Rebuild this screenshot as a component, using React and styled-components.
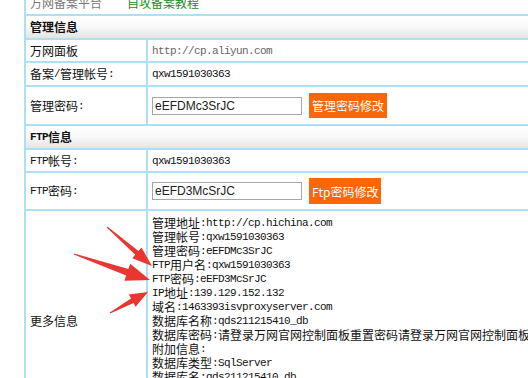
import React from 'react'
import styled, { createGlobalStyle } from 'styled-components'

const Global = createGlobalStyle`
  html, body {
    margin: 0;
    padding: 0;
    background: #fff;
    overflow: hidden;
  }
  body {
    width: 528px;
    height: 378px;
    position: relative;
    font-family: "Noto Sans CJK SC", "Liberation Sans", sans-serif;
    font-size: 12px;
    color: #111;
  }
`

const Page = styled.div`
  width: 528px;
  height: 378px;
  overflow: hidden;
  position: relative;
  padding-left: 24px;
  box-sizing: border-box;
`

const Grid = styled.div`
  margin-top: -8px;
  width: 640px;
  display: grid;
  grid-template-columns: 120px 1fr;
  gap: 2px;
  padding-left: 2px;
  background: #aee0f5;
`

const Cell = styled.div`
  background: #fff;
  min-height: ${p => p.h || 22}px;
  display: flex;
  align-items: center;
  padding: 0 4px;
  white-space: nowrap;
  line-height: 14px;
  color: ${p => p.muted ? '#666' : '#111'};
  grid-column: ${p => p.span ? '1 / -1' : 'auto'};
`

const TopCell = styled(Cell)`
  gap: 25px;
`

const TopLink = styled.span`
  color: ${p => p.green ? '#1f8a1f' : '#777'};
`

const Header = styled(Cell)`
  font-weight: bold;
  background: linear-gradient(#fff 0%, #fafafa 45%, #e4e4e4 100%);
`

const Mono = styled.span`
  font-family: "Liberation Mono", monospace;
  font-size: 11px;
  letter-spacing: -0.6px;
`

const Cjk = styled.span`
  font-family: "Noto Sans CJK SC", sans-serif;
`

const Input = styled.input`
  width: 150px;
  height: 18px;
  box-sizing: border-box;
  border: 1px solid #a7a7a7;
  padding: 0 2px;
  font-family: "Liberation Sans", Arial, sans-serif;
  font-size: 12px;
  color: #222;
  outline: none;
`

const Button = styled.button`
  margin-left: 7px;
  height: ${p => p.tall ? 26 : 25}px;
  padding: 0 3px;
  border: none;
  background: #fb6608;
  color: #fff;
  font-family: "Noto Sans CJK SC", "Liberation Sans", sans-serif;
  font-size: 12px;
`

const MoreCell = styled(Cell)`
  display: block;
  padding: 5px 4px;
`

const Line = styled.div`
  height: 14px;
  line-height: 14px;
  display: flex;
  align-items: center;

  & > span {
    display: inline-block;
    height: 14px;
    line-height: 14px;
  }
`

const Arrows = styled.svg`
  position: absolute;
  left: 0;
  top: 0;
  pointer-events: none;
`

const Mixed = ({ text }) =>
  text.split(/([\x00-\x7F]+)/).filter(Boolean).map((part, i) =>
    /^[\x00-\x7F]+$/.test(part) ? <Mono key={i}>{part}</Mono> : <Cjk key={i}>{part}</Cjk>
  )

const more = [
  '管理地址:http://cp.hichina.com',
  '管理帐号:qxw1591030363',
  '管理密码:eEFDMc3SrJC',
  'FTP用户名:qxw1591030363',
  'FTP密码:eEFD3McSrJC',
  'IP地址:139.129.152.132',
  '域名:1463393isvproxyserver.com',
  '数据库名称:qds211215410_db',
  '数据库密码:请登录万网官网控制面板重置密码请登录万网官网控制面板重置密码',
  '附加信息:',
  '数据库类型:SqlServer',
  '数据库名:qds211215410_db',
  '数据库用户名:qds211215410',
  '数据库地址:qds211215410.my3w.com',
  '数据库端口:1433',
]

const arrowPoints = (x1, y1, x2, y2, hl, hw, w0, w1) => {
  const dx = x2 - x1
  const dy = y2 - y1
  const len = Math.hypot(dx, dy)
  const ux = dx / len
  const uy = dy / len
  const nx = -uy
  const ny = ux
  const bx = x2 - ux * hl
  const by = y2 - uy * hl
  const pts = [
    [x1 + nx * w0 / 2, y1 + ny * w0 / 2],
    [bx + nx * w1 / 2, by + ny * w1 / 2],
    [bx + nx * hw / 2, by + ny * hw / 2],
    [x2, y2],
    [bx - nx * hw / 2, by - ny * hw / 2],
    [bx - nx * w1 / 2, by - ny * w1 / 2],
    [x1 - nx * w0 / 2, y1 - ny * w0 / 2],
  ]
  return pts.map(p => p[0].toFixed(1) + ',' + p[1].toFixed(1)).join(' ')
}

const App = () => {
  return (
    <Page>
      <Global />
      <Grid>
        <TopCell span>
          <TopLink>万网备案平台</TopLink>
          <TopLink green>自攻备案教程</TopLink>
        </TopCell>

        <Header span>管理信息</Header>
        <Cell h={21}>万网面板</Cell>
        <Cell h={21} muted><Mono>http://cp.aliyun.com</Mono></Cell>
        <Cell><Mixed text="备案/管理帐号:" /></Cell>
        <Cell><Mono>qxw1591030363</Mono></Cell>
        <Cell h={37}><Mixed text="管理密码:" /></Cell>
        <Cell h={37}>
          <Input defaultValue="eEFDMc3SrJC" />
          <Button>管理密码修改</Button>
        </Cell>

        <Header span><Mixed text="FTP信息" /></Header>
        <Cell h={21}><Mixed text="FTP帐号:" /></Cell>
        <Cell h={21}><Mono>qxw1591030363</Mono></Cell>
        <Cell h={36}><Mixed text="FTP密码:" /></Cell>
        <Cell h={36}>
          <Input defaultValue="eEFD3McSrJC" />
          <Button tall>Ftp密码修改</Button>
        </Cell>

        <Cell>更多信息</Cell>
        <MoreCell>
          {more.map(l => <Line key={l}><Mixed text={l} /></Line>)}
        </MoreCell>
      </Grid>

      <Arrows width="528" height="378">
        <polygon fill="#ea3530" points={arrowPoints(107, 227, 152, 266, 20, 14, 1, 5)} />
        <polygon fill="#ea3530" points={arrowPoints(74, 254, 150, 280, 24, 18, 1, 7)} />
        <polygon fill="#ea3530" points={arrowPoints(110, 313, 148, 292, 18, 14, 1, 5)} />
      </Arrows>
    </Page>
  )
}

export default App
